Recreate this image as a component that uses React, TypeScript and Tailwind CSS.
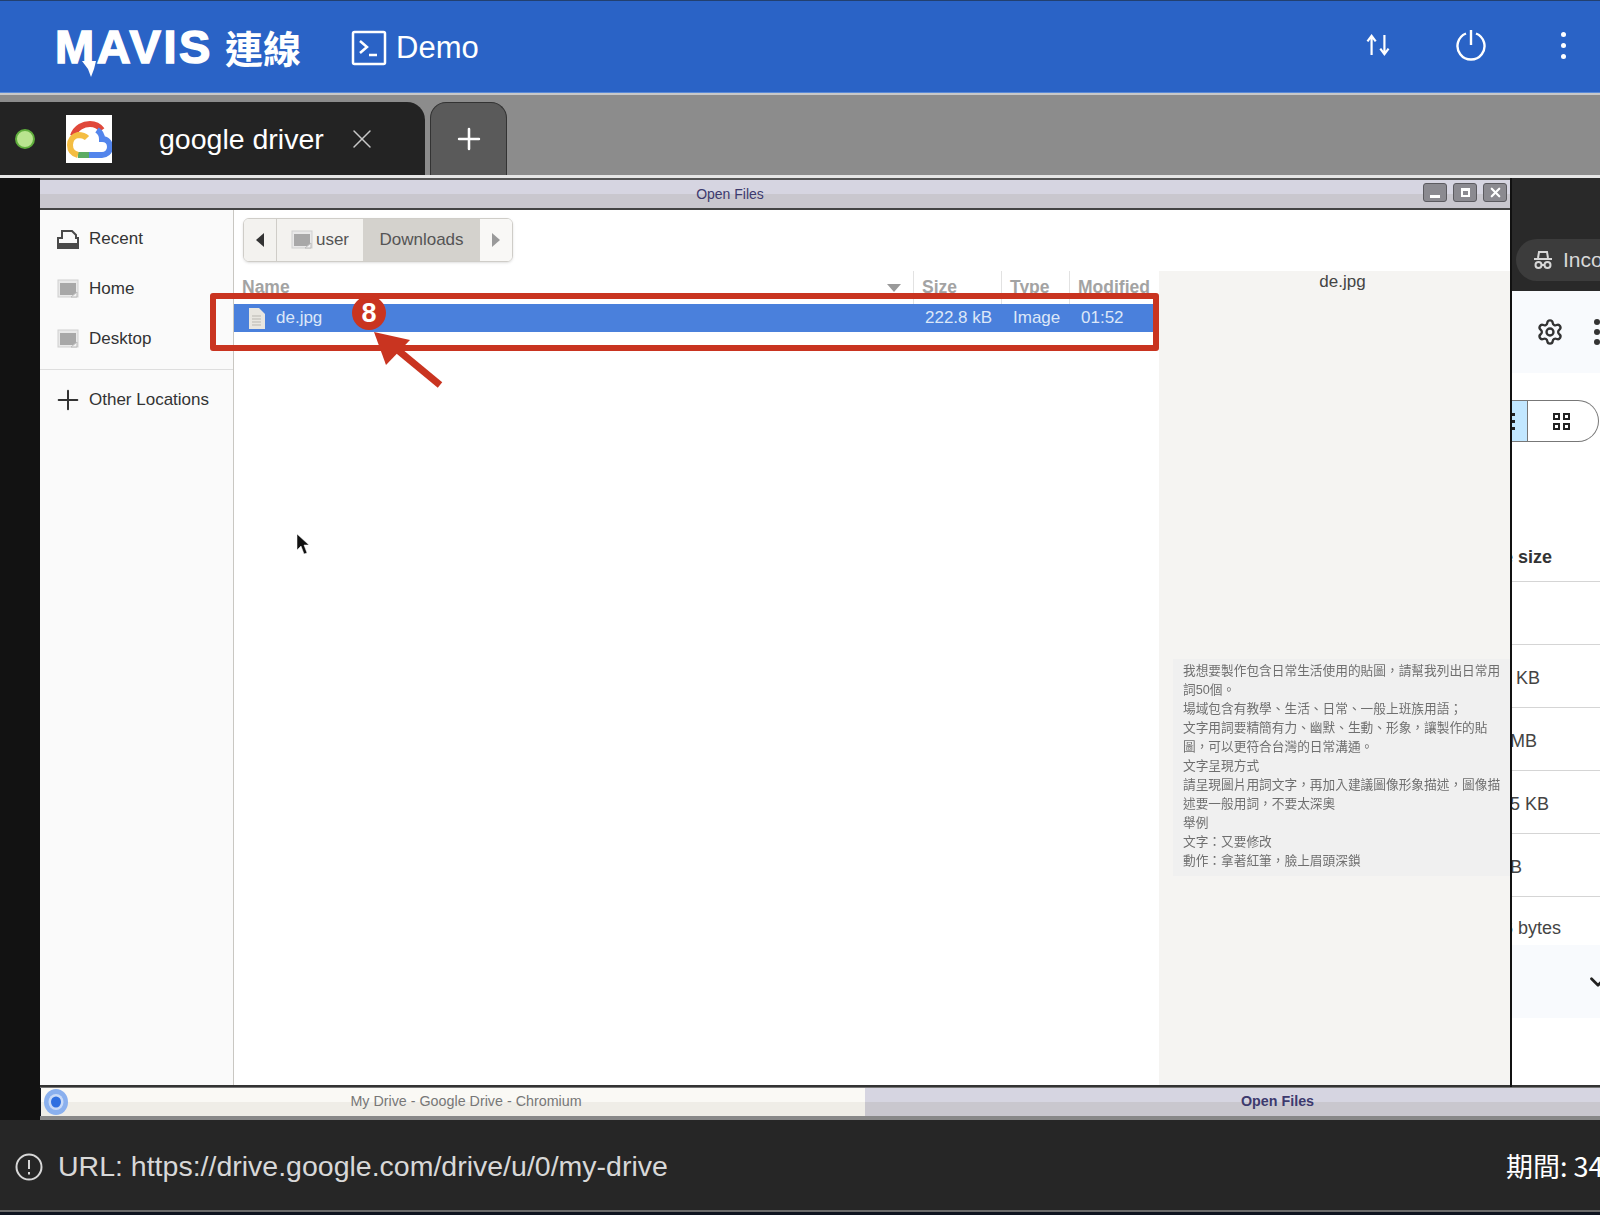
import React from "react";
import { ChevronDown, Settings, Plus, X } from "lucide-react";

const barBg = "bg-[linear-gradient(#d6d5e1_0%,#d6d5e1_50%,#c9c7ce_50%,#c9c7ce_100%)]";

const FolderIcon = () => (
  <svg width="22" height="20" viewBox="0 0 22 20">
    <rect x="1" y="1" width="20" height="17" fill="#e9e9e9" stroke="#cfcfcf" />
    <rect x="3" y="4" width="16" height="12" fill="#a8a8a8" />
    <path d="M14 18l6-5v5z" fill="#f2f2f2" stroke="#bbb" />
  </svg>
);

const RecentIcon = () => (
  <svg width="22" height="20" viewBox="0 0 22 20">
    <path d="M1 19V9h4V2h10l4 4v3h2v10z" fill="#fafafa" stroke="#4a4a4a" strokeWidth="2" />
    <path d="M1 14h20v5H1z" fill="#4a4a4a" />
  </svg>
);

const SideItem = ({ icon, label }: { icon: React.ReactNode; label: string }) => (
  <div className="h-[50px] flex items-center pl-[17px] gap-[10px] text-[17px] text-[#333]">
    <div className="w-[22px] flex justify-center">{icon}</div>
    <div>{label}</div>
  </div>
);

const HeaderCell = ({ label, className }: { label: string; className: string }) => (
  <div className={`h-[33px] pl-[8px] pt-[3px] border-r border-[#e2e2e2] font-bold text-[17.500px] text-[#a3a3a3] ${className}`}>
    {label}
  </div>
);

const previewLines = [
  "我想要製作包含日常生活使用的貼圖，請幫我列出日常用",
  "詞50個。",
  "場域包含有教學、生活、日常、一般上班族用語；",
  "文字用詞要精簡有力、幽默、生動、形象，讓製作的貼",
  "圖，可以更符合台灣的日常溝通。",
  "文字呈現方式",
  "請呈現圖片用詞文字，再加入建議圖像形象描述，圖像描",
  "述要一般用詞，不要太深奧",
  "舉例",
  "文字：又要修改",
  "動作：拿著紅筆，臉上眉頭深鎖",
];

const sizeRows = [
  { text: "", ml: "ml-[6px]" },
  { text: "2 KB", ml: "ml-[-11px]" },
  { text: "1 MB", ml: "ml-[-17px]" },
  { text: "15 KB", ml: "ml-[-12px]" },
  { text: "1 MB", ml: "ml-[-32px]" },
];

const GoogleCloudIcon = () => (
  <svg width="46" height="48" viewBox="0 0 46 48" fill="none">
    <path d="M7 21C10 12 18 9 24 9c5 0 9 2 12 6" stroke="#e0483a" strokeWidth="6" />
    <path d="M31 15c3 2 5 5 5 9 6 0 8 5 8 8 0 5-4 8-8 8H23" stroke="#5385ec" strokeWidth="6" />
    <path d="M23 40H12" stroke="#5cab64" strokeWidth="6" />
    <path d="M21 23c-3-3-6-3-9-3-5 1-8 5-8 10 0 6 4 9 8 10" stroke="#f4bd42" strokeWidth="6" />
  </svg>
);

const ChromiumIcon = () => (
  <svg width="24" height="28" viewBox="0 0 24 28">
    <ellipse cx="12" cy="14" rx="12" ry="13" fill="#8ab0ee" />
    <ellipse cx="12" cy="14" rx="7.500" ry="8" fill="#c9daf7" />
    <ellipse cx="12" cy="14" rx="5" ry="5.500" fill="#2f6fe0" />
  </svg>
);

export default function App() {
  return (
    <div className="relative w-[1600px] h-[1215px] overflow-hidden flex flex-col bg-[#0f1420] [font-family:'Liberation_Sans','Noto_Sans_CJK_TC',sans-serif]">
      {/* top bar */}
      <div className="h-[93px] shrink-0 bg-[#2a63c6] border-t border-[#22406f] border-b border-b-[#5a8ad8] flex items-center text-white">
        <div className="relative ml-[55px] w-[170px] text-[47px] leading-none font-black tracking-[2.500px] [-webkit-text-stroke:1.500px_white]">
          MAVIS
          <svg className="absolute left-[27px] top-[38px]" width="14" height="16" viewBox="0 0 14 16">
            <path d="M0 0h14l-2 8-3 8-3-8z" fill="white" />
          </svg>
        </div>
        <div className="text-[38px] leading-none font-bold [font-family:'Noto_Sans_CJK_TC',sans-serif]">連線</div>
        <svg className="ml-[50px] mt-[2px]" width="36" height="36" viewBox="0 0 36 36" fill="none" stroke="white" strokeWidth="2.500">
          <rect x="2" y="2" width="32" height="32" rx="1.500" />
          <path d="M9 11l7 6-7 6M18 25h8" />
        </svg>
        <div className="ml-[9px] mt-[2px] text-[31px] leading-none">Demo</div>
        <div className="ml-auto flex items-center">
          <svg className="mt-[-3px]" width="26" height="22" viewBox="0 0 26 24" fill="none" stroke="white" strokeWidth="2.400">
            <path d="M6 23V3M1.500 8L6 2l4.500 6" />
            <path d="M20 1v20M15.500 16l4.500 6 4.500-6" />
          </svg>
          <svg className="ml-[64px] mt-[-4px]" width="32" height="32" viewBox="0 0 32 32" fill="none" stroke="white" strokeWidth="2.400">
            <path d="M11 4.500a13.500 13.500 0 1 0 10 0M16 1v15" />
          </svg>
          <div className="ml-[74px] mr-[34px] mt-[-3px] flex flex-col gap-[6px]">
            <div className="w-[5px] h-[5px] rounded-full bg-white"></div>
            <div className="w-[5px] h-[5px] rounded-full bg-white"></div>
            <div className="w-[5px] h-[5px] rounded-full bg-white"></div>
          </div>
        </div>
      </div>

      {/* tab bar */}
      <div className="h-[82px] shrink-0 bg-[#8c8c8c] border-t-2 border-[#c8c8c8] pt-[7px] flex gap-[5px]">
        <div className="w-[425px] bg-[#232323] rounded-tr-[18px] flex items-center relative">
          <div className="ml-[15px] w-[20px] h-[20px] rounded-full bg-[#b9e58f] border-2 border-[#5fae3c]"></div>
          <div className="ml-[30px] w-[48px] h-[50px] bg-white border border-[#222] flex items-center justify-center">
            <GoogleCloudIcon />
          </div>
          <div className="ml-[46px] mt-[2px] text-[28.500px] leading-none text-white">google driver</div>
          <X className="ml-[22px] text-[#c8c8c8]" size={32} strokeWidth={1.100} />
        </div>
        <div className="w-[77px] bg-[#5a5a5a] border border-b-0 border-[#333] rounded-t-[16px] flex items-center justify-center">
          <Plus className="text-white" size={34} strokeWidth={1.800} />
        </div>
      </div>

      <div className="h-[3px] shrink-0 bg-[#e6e6e6]"></div>

      {/* remote desktop */}
      <div className="h-[942px] shrink-0 flex">
        <div className="w-[40px] shrink-0 bg-[#121212]"></div>
        <div className="flex-1 min-w-0 flex flex-col">
          <div className="h-[909px] flex">
            {/* file dialog */}
            <div className="w-[1472px] shrink-0 flex flex-col bg-white border-r-2 border-[#111]">
              <div className={`h-[32px] shrink-0 border-t-2 border-[#555] border-b-2 border-b-[#444] relative flex items-center justify-center pr-[90px] text-[14px] text-[#3d3a6e] ${barBg}`}>
                <div>Open Files</div>
                <div className="absolute right-[3px] top-[3px] flex gap-[6px]">
                  <div className="w-[24px] h-[19px] rounded-[3px] bg-[#8b8a90] border border-[#5c5b60] flex items-end justify-center pb-[3px]">
                    <div className="w-[10px] h-[3px] bg-white"></div>
                  </div>
                  <div className="w-[24px] h-[19px] rounded-[3px] bg-[#8b8a90] border border-[#5c5b60] flex items-center justify-center">
                    <div className="w-[9px] h-[9px] border-2 border-t-[3px] border-white"></div>
                  </div>
                  <div className="w-[24px] h-[19px] rounded-[3px] bg-[#8b8a90] border border-[#5c5b60] flex items-center justify-center">
                    <X className="text-white" size={15} strokeWidth={3.500} />
                  </div>
                </div>
              </div>
              <div className="flex-1 min-h-0 flex border-b-2 border-[#333]">
                <div className="w-[194px] shrink-0 bg-[#fafafa] border-r border-[#c9c7c2] pt-[4px]">
                  <SideItem icon={<RecentIcon />} label="Recent" />
                  <SideItem icon={<FolderIcon />} label="Home" />
                  <SideItem icon={<FolderIcon />} label="Desktop" />
                  <div className="mt-[5px] h-px bg-[#dedede]"></div>
                  <div className="mt-[5px]">
                    <SideItem icon={<Plus className="shrink-0 text-[#333]" size={32} strokeWidth={1.500} />} label="Other Locations" />
                  </div>
                </div>
                <div className="flex-1 min-w-0 flex flex-col">
                  <div className="h-[61px] shrink-0 pt-[8px] pl-[9px]">
                    <div className="w-[270px] h-[44px] flex rounded-[6px] border border-[#cfcdc8] overflow-hidden text-[17px] text-[#555] shadow-sm">
                      <div className="w-[33px] bg-[#f3f2ef] border-r border-[#cfcdc8] flex items-center justify-center">
                        <div className="w-0 h-0 border-y-[7px] border-y-transparent border-r-[8px] border-r-[#333]"></div>
                      </div>
                      <div className="w-[86px] bg-[#f3f2ef] flex items-center justify-center gap-[3px]">
                        <FolderIcon />
                        <div>user</div>
                      </div>
                      <div className="w-[117px] bg-[#d4d2cd] flex items-center justify-center text-[#555]">Downloads</div>
                      <div className="flex-1 bg-[#f9f8f6] flex items-center justify-center">
                        <div className="w-0 h-0 border-y-[7px] border-y-transparent border-l-[8px] border-l-[#9a9a9a]"></div>
                      </div>
                    </div>
                  </div>
                  <div className="flex-1 min-h-0 flex">
                    <div className="w-[925px] shrink-0">
                      <div className="flex">
                        <div className="w-[680px] h-[33px] pl-[8px] pt-[3px] border-r border-[#e2e2e2] font-bold text-[17.500px] text-[#a3a3a3] relative">
                          Name
                          <div className="absolute right-[12px] top-[13px] w-0 h-0 border-x-[7px] border-x-transparent border-t-[8px] border-t-[#9a9a9a]"></div>
                        </div>
                        <HeaderCell label="Size" className="w-[88px]" />
                        <HeaderCell label="Type" className="w-[68px]" />
                        <HeaderCell label="Modified" className="flex-1 border-r-0" />
                      </div>
                      <div className="h-[28px] bg-[#4a80dc] flex items-center text-[17px] text-[#dce7f8]">
                        <svg className="ml-[14px]" width="17" height="21" viewBox="0 0 17 21">
                          <path d="M1 0h10l6 6v15H1z" fill="#e8e6e0" />
                          <path d="M4 8h9M4 11h9M4 14h9M4 17h9" stroke="#b9b7b1" />
                        </svg>
                        <div className="ml-[11px] w-[649px]">de.jpg</div>
                        <div className="w-[88px]">222.8 kB</div>
                        <div className="w-[68px]">Image</div>
                        <div>01:52</div>
                      </div>
                    </div>
                    <div className="flex-1 min-w-0 bg-[#f5f4f2]">
                      <div className="h-[22px] pl-[16px] text-center text-[17px] leading-[22px] text-[#444]">de.jpg</div>
                      <div className="mt-[366px] ml-[14px] h-[217px] bg-[#f0f0f0] pl-[10px] pt-[3px] text-[12.700px] leading-[19px] text-[#6f6f6f] whitespace-nowrap overflow-hidden blur-[0.6px]">
                        {previewLines.map((line) => (
                          <div key={line}>{line}</div>
                        ))}
                      </div>
                    </div>
                  </div>
                </div>
              </div>
            </div>

            {/* browser behind the dialog */}
            <div className="flex-1 min-w-0 overflow-hidden bg-white flex flex-col text-[18px] text-[#444] border-b-2 border-[#333]">
              <div className="h-[113px] shrink-0 bg-[#292929] pt-[61px] pl-[4px]">
                <div className="w-[140px] h-[42px] rounded-full bg-[#3c3c3c] flex items-center pl-[17px] gap-[10px] text-[21px] text-[#d8d8d8] whitespace-nowrap">
                  <svg className="shrink-0" width="20" height="20" viewBox="0 0 20 20" fill="none" stroke="#d8d8d8" strokeWidth="2">
                    <path d="M5 8l1-6h8l1 6M1 9h18" />
                    <circle cx="5.500" cy="15" r="3" />
                    <circle cx="14.500" cy="15" r="3" />
                    <path d="M8.500 15h3" />
                  </svg>
                  <div>Incognito</div>
                </div>
              </div>
              <div className="h-[82px] shrink-0 bg-[#f8fafd] flex items-center pl-[24px] gap-[30px]">
                <Settings className="shrink-0 text-[#333]" size={28} strokeWidth={2} />
                <div className="shrink-0 flex flex-col gap-[4px]">
                  <div className="w-[6px] h-[6px] rounded-full bg-[#333]"></div>
                  <div className="w-[6px] h-[6px] rounded-full bg-[#333]"></div>
                  <div className="w-[6px] h-[6px] rounded-full bg-[#333]"></div>
                </div>
              </div>
              <div className="h-[42px] mt-[27px] shrink-0 flex">
                <div className="w-[16px] bg-[#c2e7ff] border-y border-r border-[#777] flex flex-col justify-center gap-[4px]">
                  <div className="w-[3px] h-[3px] bg-[#222]"></div>
                  <div className="w-[3px] h-[3px] bg-[#222]"></div>
                  <div className="w-[3px] h-[3px] bg-[#222]"></div>
                </div>
                <div className="w-[71px] border-y border-r border-[#777] rounded-r-full flex items-center pl-[25px]">
                  <div className="grid grid-cols-2 gap-[3px]">
                    <div className="w-[7px] h-[7px] border-2 border-[#222]"></div>
                    <div className="w-[7px] h-[7px] border-2 border-[#222]"></div>
                    <div className="w-[7px] h-[7px] border-2 border-[#222]"></div>
                    <div className="w-[7px] h-[7px] border-2 border-[#222]"></div>
                  </div>
                </div>
              </div>
              <div className="h-[63px] mt-[77px] pt-[15px] shrink-0 border-b border-[#d5d5d5] flex items-center whitespace-nowrap font-bold text-[#333]">
                <div className="ml-[-30px]">File size</div>
              </div>
              {sizeRows.map((row) => (
                <div key={row.ml} className="h-[63px] pt-[4px] shrink-0 border-b border-[#d5d5d5] flex items-center whitespace-nowrap">
                  <div className={row.ml}>{row.text}</div>
                </div>
              ))}
              <div className="h-[48px] pt-[14px] shrink-0 flex items-center whitespace-nowrap">
                <div className="ml-[-9px]">6 bytes</div>
              </div>
              <div className="h-[73px] shrink-0 bg-[#f8fafd] flex items-center pl-[73px]">
                <ChevronDown className="shrink-0 text-[#222]" size={26} strokeWidth={2.500} />
              </div>
            </div>
          </div>

          {/* window list */}
          <div className="h-[33px] shrink-0 border-b-[4px] border-[#888] border-t border-t-[#777] flex text-[14.300px]">
            <div className="w-[824px] shrink-0 ml-[1px] pl-[26px] relative flex items-center justify-center text-[#777] bg-[linear-gradient(#faf9f5_0%,#faf9f5_50%,#efede7_50%,#efede7_100%)]">
              <div className="absolute left-[3px] top-0"><ChromiumIcon /></div>
              <div>My Drive - Google Drive - Chromium</div>
            </div>
            <div className={`flex-1 flex items-center justify-center font-bold text-[#3d3a6e] pl-[90px] ${barBg}`}>Open Files</div>
          </div>
        </div>
      </div>

      {/* footer */}
      <div className="h-[92px] shrink-0 pt-[3px] bg-[#262626] border-b-2 border-[#6a6a6a] flex items-center text-[28.500px] text-[#d8d8d8] whitespace-nowrap">
        <svg className="ml-[15px]" width="28" height="28" viewBox="0 0 28 28" fill="none" stroke="#d8d8d8" strokeWidth="2">
          <circle cx="14" cy="14" r="12.500" />
          <path d="M14 7v9M14 19v2.500" />
        </svg>
        <div className="ml-[15px]">URL: https://drive.google.com/drive/u/0/my-drive</div>
        <div className="ml-auto w-[94px] overflow-hidden text-[27px] text-white [font-family:'Noto_Sans_CJK_TC',sans-serif]">期間: 34 分鐘</div>
      </div>

      {/* annotation */}
      <div className="absolute left-[210px] top-[293px] w-[949px] h-[58px] border-[6px] border-[#c93420] rounded-[3px]"></div>
      <svg className="absolute left-[360px] top-[320px]" width="100" height="80" viewBox="0 0 100 80">
        <path d="M80 65L28 22" stroke="#c93420" strokeWidth="7" />
        <path d="M14 12L50 20 26 45z" fill="#c93420" />
      </svg>
      <div className="absolute left-[352px] top-[296px] w-[34px] h-[34px] rounded-full bg-[#c93420] flex items-center justify-center text-white text-[27px] font-bold">8</div>
      {/* mouse pointer */}
      <svg className="absolute left-[296px] top-[533px]" width="14" height="22" viewBox="0 0 14 22">
        <path d="M1 1v16l4-4 3 8 3-1-3-8h5z" fill="#111" stroke="#fff" strokeWidth="0.500" />
      </svg>
    </div>
  );
}
